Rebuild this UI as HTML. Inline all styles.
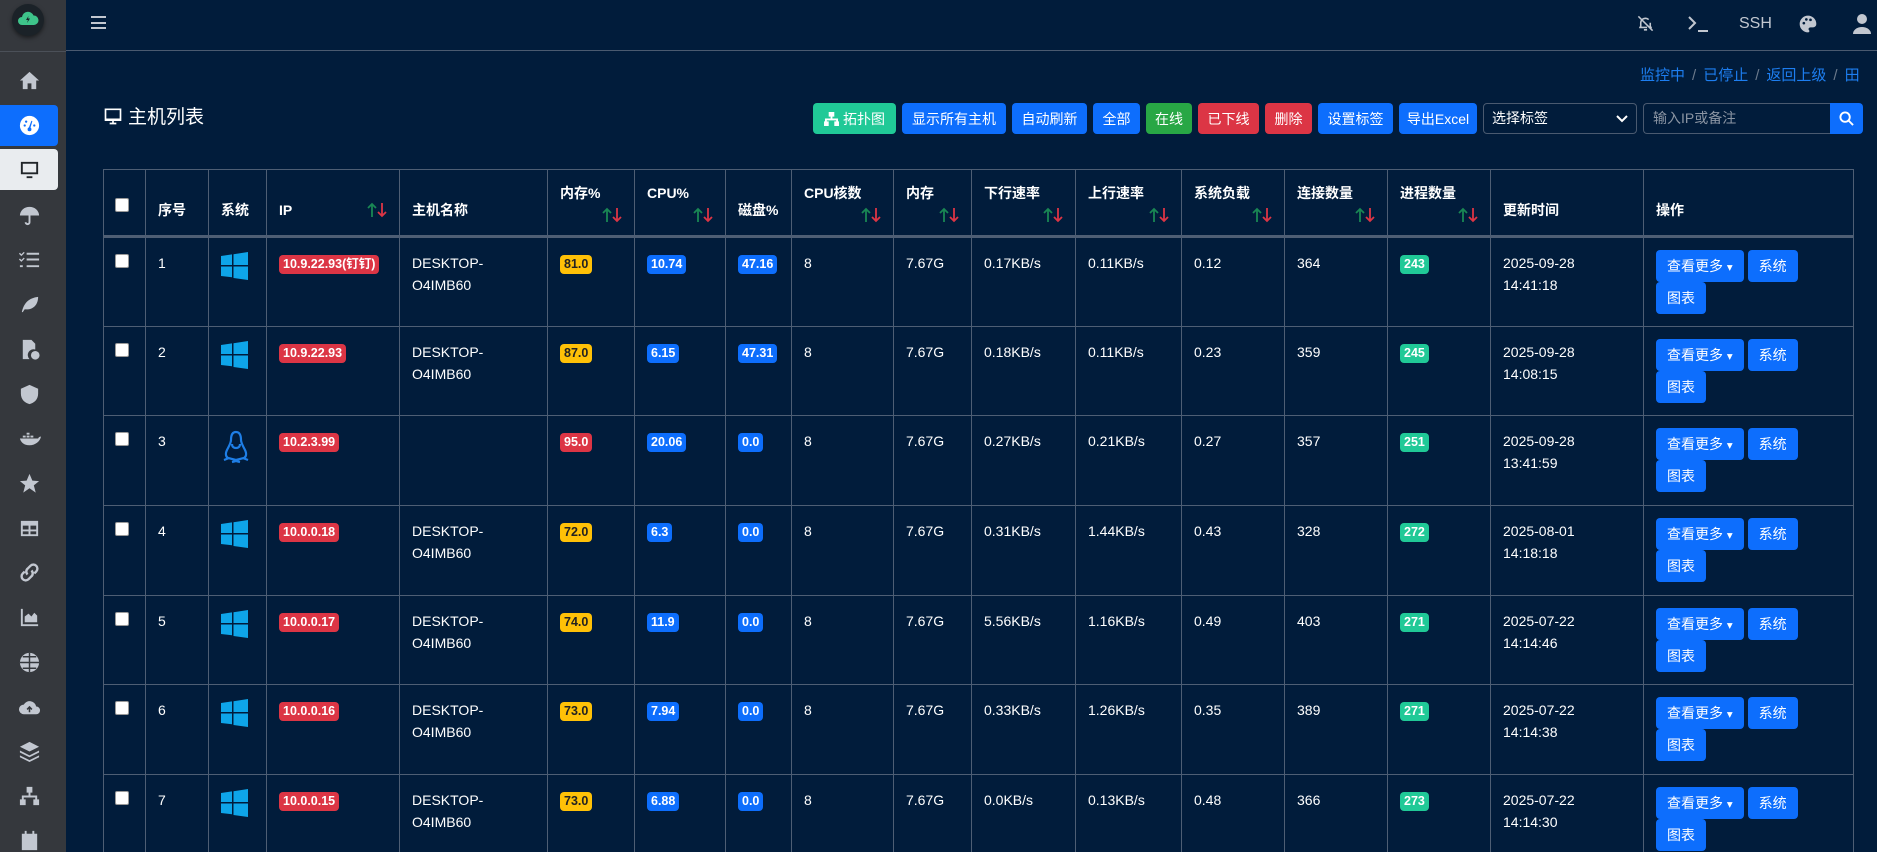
<!DOCTYPE html>
<html><head><meta charset="utf-8">
<style>
*{box-sizing:border-box;margin:0;padding:0}
html,body{width:1877px;height:852px;overflow:hidden}
body{background:#011c3b;font-family:"Liberation Sans","Noto Sans CJK SC",sans-serif;color:#fff;font-size:14px;position:relative}
.side{position:absolute;left:0;top:0;width:66px;height:852px;background:#35383d}
.side .sep{position:absolute;left:0;top:51px;width:66px;height:1px;background:#4b5058}
.logo{position:absolute;left:12px;top:4px;width:32px;height:32px;border-radius:50%;background:#1b2228;box-shadow:0 2px 4px rgba(0,0,0,.5)}
.si{position:absolute;left:0;width:58px;height:41px;display:flex;align-items:center;justify-content:center}
.si svg{width:23px;height:23px;fill:#c2c7d0}
.top{position:absolute;left:66px;top:0;right:0;height:51px;border-bottom:1px solid #4a5a70}
.ham{position:absolute;left:91px;top:16px;width:15px}
.ham i{display:block;height:2px;background:#c2c7d0;margin-bottom:3.5px}
.ti{position:absolute;top:14px;color:#c2c7d0;font-size:16px}
.bc{position:absolute;top:64px;left:1640px;font-size:15px;color:#1d7ef0;white-space:nowrap}
.bc span.s{color:#6c7a8c;margin:0 7px}
h1{position:absolute;left:103px;top:102px;font-size:19px;font-weight:normal;display:flex;align-items:center}
.btn{position:absolute;top:103px;height:31px;border-radius:4px;color:#fff;font-size:14px;display:flex;align-items:center;justify-content:center;white-space:nowrap}
.b{background:#0d6efd}.g{background:#20c997}.gr{background:#28a745}.r{background:#dc3545}
.sel{position:absolute;left:1483px;top:103px;width:154px;height:31px;border:1px solid #4a5a70;border-radius:4px;padding-left:8px;line-height:29px;font-size:14px}
.inp{position:absolute;left:1643px;top:103px;width:188px;height:31px;border:1px solid #4a5a70;border-right:none;border-radius:4px 0 0 4px;padding-left:9px;line-height:29px;color:#8b95a3;font-size:14px}
.sb{position:absolute;left:1830px;top:103px;width:33px;height:31px;background:#0d6efd;border-radius:0 4px 4px 0;display:flex;align-items:center;justify-content:center}
table{position:absolute;left:103px;top:169px;border-collapse:collapse;table-layout:fixed;width:1750px}
td,th{border:1px solid #4e5e74;text-align:left;vertical-align:top}
th{height:67px;font-weight:bold;vertical-align:bottom;padding:0 12px 14px;font-size:14px;line-height:22px;border-bottom:3px solid #4e5e74}
td{height:89.7px;padding:14px 12px 0;line-height:22px}
.ar{height:17px;margin-top:3px;margin-bottom:-3px;text-align:right;line-height:0}
.cb{display:inline-block;width:14px;height:14px;background:#fff;border-radius:2px;border:1px solid #999;margin-top:1px}
.bd{display:inline-block;padding:0 4px;border-radius:4px;font-size:12.5px;font-weight:bold;line-height:19px;margin-top:2px}
.y{background:#ffc107;color:#222}
.ab{display:inline-block;background:#0d6efd;border-radius:4px;height:32px;line-height:32px;padding:0 11px;font-size:14px;vertical-align:top}
</style></head><body>
<svg width="0" height="0" style="position:absolute"><defs><g id="arr"><path d="M5 15V2M1 6l4-4 4 4" stroke="#198754" stroke-width="1.8" fill="none"/><path d="M15 1v13M11 10l4 4 4-4" stroke="#dc3545" stroke-width="1.8" fill="none"/></g></defs></svg>
<div class="side">
 <div class="logo"><svg width="32" height="32" viewBox="0 0 32 32"><path d="M10 21a4 4 0 0 1 0-8 6 6 0 0 1 11.5-1.5A4.5 4.5 0 0 1 22 21z" fill="#3ec48a"/><path d="M16.5 12l-2.5 4h2l-1 3 3-4.5h-2z" fill="#1b2228"/></svg></div>
 <div class="sep"></div>
 <div class="si" style="top:60px"><svg viewBox="0 0 24 24"><path d="M12 3L2 12h3v9h5v-6h4v6h5v-9h3z"/></svg></div>
 <div class="si" style="top:105px;background:#0d6efd;border-radius:0 4px 4px 0"><svg viewBox="0 0 24 24" style="fill:#fff"><circle cx="12" cy="12" r="10"/><path d="M11 15l3-8 1 .4-2.3 8z" fill="#0d6efd"/><circle cx="12" cy="16" r="2" fill="#0d6efd"/><circle cx="7" cy="12" r="1.2" fill="#0d6efd"/><circle cx="8.5" cy="8" r="1.2" fill="#0d6efd"/><circle cx="17" cy="12" r="1.2" fill="#0d6efd"/></svg></div>
 <div class="si" style="top:149px;background:#e9ecef;border-radius:0 4px 4px 0"><svg viewBox="0 0 24 24" style="fill:#212529"><path d="M3 4h18v13H3z M5 6v9h14V6z M9 19h6v2H9z"/></svg></div>
 <div class="si" style="top:195px"><svg viewBox="0 0 24 24"><path d="M12 3a10 9 0 0 1 10 9H2A10 9 0 0 1 12 3zM11 12h2v7a3 3 0 0 1-6 0h2a1 1 0 0 0 2 0z"/></svg></div>
 <div class="si" style="top:239px"><svg viewBox="0 0 24 24"><path d="M2 5l1.5 1.5L6 4l1 1-3.5 3.5L1 6zM2 11l1.5 1.5L6 10l1 1-3.5 3.5L1 12zM2 18h3v2H2zM9 5h13v2H9zM9 11h13v2H9zM9 18h13v2H9z"/></svg></div>
 <div class="si" style="top:284px"><svg viewBox="0 0 24 24"><path d="M4 20C6 10 12 5 21 4c0 9-6 14-14 13l-2 3z"/></svg></div>
 <div class="si" style="top:329px"><svg viewBox="0 0 24 24"><path d="M5 2h9l4 4v6a6 6 0 0 0-6 10H5z"/><circle cx="18" cy="18" r="4.5"/></svg></div>
 <div class="si" style="top:374px"><svg viewBox="0 0 24 24"><path d="M12 2l9 4v5c0 6-4 10-9 11-5-1-9-5-9-11V6z"/></svg></div>
 <div class="si" style="top:418px"><svg viewBox="0 0 24 24"><path d="M2 12h19c1-2 2-2 3-2-1 5-6 9-12 9-6 0-9-3-10-7zM5 9h3v2H5zM9 9h3v2H9zM13 9h3v2h-3zM9 6h3v2H9z"/></svg></div>
 <div class="si" style="top:463px"><svg viewBox="0 0 24 24"><path d="M12 2l3 7 7 .5-5.5 4.5 2 7.5L12 17l-6.5 4.5 2-7.5L2 9.5 9 9z"/></svg></div>
 <div class="si" style="top:508px"><svg viewBox="0 0 24 24"><path d="M3 4h18v16H3zM5 9v4h6V9zm8 0v4h6V9zM5 15v3h6v-3zm8 0v3h6v-3z"/></svg></div>
 <div class="si" style="top:552px"><svg viewBox="0 0 24 24" style="fill:none;stroke:#c2c7d0;stroke-width:2.5"><path d="M10 14a4 4 0 0 1 0-6l3-3a4 4 0 0 1 6 6l-2 2M14 10a4 4 0 0 1 0 6l-3 3a4 4 0 0 1-6-6l2-2"/></svg></div>
 <div class="si" style="top:597px"><svg viewBox="0 0 24 24"><path d="M3 3h2v16h16v2H3zM7 17v-6l4-3 3 3 3-4 3 3v7z"/></svg></div>
 <div class="si" style="top:642px"><svg viewBox="0 0 24 24"><circle cx="12" cy="12" r="10"/><path d="M2 12h20M12 2v20M5 6h14M5 18h14" stroke="#35383d" stroke-width="1.5"/></svg></div>
 <div class="si" style="top:687px"><svg viewBox="0 0 24 24"><path d="M6 19a5 5 0 0 1 0-10 7 7 0 0 1 13 2 4 4 0 0 1 0 8z"/><path d="M12 17v-5M9.5 14l2.5-2.5 2.5 2.5" stroke="#35383d" stroke-width="1.6" fill="none"/></svg></div>
 <div class="si" style="top:731px"><svg viewBox="0 0 24 24"><path d="M12 2l10 5-10 5L2 7zM2 11l10 5 10-5v2l-10 5-10-5zM2 16l10 5 10-5v2l-10 5-10-5z"/></svg></div>
 <div class="si" style="top:776px"><svg viewBox="0 0 24 24"><path d="M9 2h6v6H9zM11 8h2v3h7v4h-2v-2H6v2H4v-4h7zM2 15h6v6H2zM16 15h6v6h-6z"/></svg></div>
 <div class="si" style="top:820px"><svg viewBox="0 0 24 24"><path d="M4 5h16v17H4zM7 2h2v4H7zM15 2h2v4h-2z"/></svg></div>
</div>
<div class="top"></div>
<div class="ham"><i></i><i></i><i></i></div>
<svg class="ti" style="left:1636px;top:14px" width="19" height="19" viewBox="0 0 24 24" fill="none" stroke="#c2c7d0" stroke-width="2"><path d="M6 17V11a6 6 0 0 1 10-4M18 11v6h2M4 17h10M10 20h4M3 3l18 18"/></svg>
<svg class="ti" style="left:1687px;top:15px" width="22" height="18" viewBox="0 0 22 18" fill="none" stroke="#c2c7d0" stroke-width="2"><path d="M2 2l6 6-6 6M11 16h10"/></svg>
<div class="ti" style="left:1739px;top:15px">SSH</div>
<svg class="ti" style="left:1798px;top:14px" width="20" height="20" viewBox="0 0 24 24"><path d="M12 2a10 10 0 0 0 0 20c2 0 2-2 1-3s0-3 2-3h3a4 4 0 0 0 4-4c0-6-5-10-10-10z" fill="#c2c7d0"/><circle cx="7" cy="11" r="1.6" fill="#011c3b"/><circle cx="10" cy="6.5" r="1.6" fill="#011c3b"/><circle cx="15" cy="7" r="1.6" fill="#011c3b"/></svg>
<svg class="ti" style="left:1853px;top:14px" width="18" height="20" viewBox="0 0 18 20"><circle cx="9" cy="5" r="5" fill="#c2c7d0"/><path d="M0 20a9 7 0 0 1 18 0z" fill="#c2c7d0"/></svg>
<div class="bc">监控中<span class="s">/</span>已停止<span class="s">/</span>返回上级<span class="s">/</span>田</div>
<h1><svg width="20" height="20" viewBox="0 0 24 24" style="margin-right:5px"><path d="M2 3h20v15H2zM4 5v10h16V5zM8 20h8v2H8z M11 17h2v4h-2z" fill="#fff"/></svg>主机列表</h1>
<div class="btn g" style="left:813px;width:83px"><svg width="15" height="14" viewBox="0 0 16 15" style="margin-right:4px"><path d="M5 0h6v5H9v2h6v3h1v5h-5v-5h2V9H3v1h2v5H0v-5h1V7h6V5H5z" fill="#fff"/></svg>拓扑图</div>
<div class="btn b" style="left:902px;width:104px">显示所有主机</div>
<div class="btn b" style="left:1012px;width:75px">自动刷新</div>
<div class="btn b" style="left:1093px;width:47px">全部</div>
<div class="btn gr" style="left:1146px;width:46px">在线</div>
<div class="btn r" style="left:1198px;width:61px">已下线</div>
<div class="btn r" style="left:1265px;width:47px">删除</div>
<div class="btn b" style="left:1318px;width:75px">设置标签</div>
<div class="btn b" style="left:1399px;width:78px">导出Excel</div>
<div class="sel">选择标签<svg style="position:absolute;right:8px;top:11px" width="12" height="8" viewBox="0 0 12 8" fill="none" stroke="#fff" stroke-width="2"><path d="M1 1l5 5 5-5"/></svg></div>
<div class="inp">输入IP或备注</div>
<div class="sb"><svg width="15" height="15" viewBox="0 0 16 16" fill="none" stroke="#fff" stroke-width="2"><circle cx="6.5" cy="6.5" r="5"/><path d="M10 10l5 5"/></svg></div>

<table>
<colgroup><col style="width:42px"><col style="width:63px"><col style="width:58px"><col style="width:133px"><col style="width:148px"><col style="width:87px"><col style="width:91px"><col style="width:66px"><col style="width:102px"><col style="width:78px"><col style="width:104px"><col style="width:106px"><col style="width:103px"><col style="width:103px"><col style="width:103px"><col style="width:153px"><col style="width:210px"></colgroup>
<tr>
<th style="padding-left:11px;padding-bottom:17px"><span class="cb"></span></th><th>序号</th><th>系统</th>
<th><div style="display:flex;justify-content:space-between;align-items:center"><span>IP</span><svg width="20" height="16"><use href="#arr"/></svg></div></th>
<th>主机名称</th>
<th>内存%<div class="ar"><svg width="20" height="16"><use href="#arr"/></svg></div></th>
<th>CPU%<div class="ar"><svg width="20" height="16"><use href="#arr"/></svg></div></th>
<th>磁盘%</th>
<th>CPU核数<div class="ar"><svg width="20" height="16"><use href="#arr"/></svg></div></th>
<th>内存<div class="ar"><svg width="20" height="16"><use href="#arr"/></svg></div></th>
<th>下行速率<div class="ar"><svg width="20" height="16"><use href="#arr"/></svg></div></th>
<th>上行速率<div class="ar"><svg width="20" height="16"><use href="#arr"/></svg></div></th>
<th>系统负载<div class="ar"><svg width="20" height="16"><use href="#arr"/></svg></div></th>
<th>连接数量<div class="ar"><svg width="20" height="16"><use href="#arr"/></svg></div></th>
<th>进程数量<div class="ar"><svg width="20" height="16"><use href="#arr"/></svg></div></th>
<th>更新时间</th><th>操作</th>
</tr>
<tr><td style="padding-left:11px"><span class="cb"></span></td><td>1</td><td><svg width="27" height="28" viewBox="0 0 27 28"><path d="M0 4l11-1.6V13H0zM12.5 2.2L27 0v13H12.5zM0 14.5h11v10.8L0 24zM12.5 14.5H27V28l-14.5-2z" fill="#0ea5e9"/></svg></td><td><span class="bd r">10.9.22.93(钉钉)</span></td><td>DESKTOP-<br>O4IMB60</td><td><span class="bd y">81.0</span></td><td><span class="bd b">10.74</span></td><td><span class="bd b">47.16</span></td><td>8</td><td>7.67G</td><td>0.17KB/s</td><td>0.11KB/s</td><td>0.12</td><td>364</td><td><span class="bd g">243</span></td><td>2025-09-28<br>14:41:18</td><td style="padding-top:12px"><span class="ab">查看更多 <small>▾</small></span> <span class="ab">系统</span><br><span class="ab">图表</span></td></tr>
<tr><td style="padding-left:11px"><span class="cb"></span></td><td>2</td><td><svg width="27" height="28" viewBox="0 0 27 28"><path d="M0 4l11-1.6V13H0zM12.5 2.2L27 0v13H12.5zM0 14.5h11v10.8L0 24zM12.5 14.5H27V28l-14.5-2z" fill="#0ea5e9"/></svg></td><td><span class="bd r">10.9.22.93</span></td><td>DESKTOP-<br>O4IMB60</td><td><span class="bd y">87.0</span></td><td><span class="bd b">6.15</span></td><td><span class="bd b">47.31</span></td><td>8</td><td>7.67G</td><td>0.18KB/s</td><td>0.11KB/s</td><td>0.23</td><td>359</td><td><span class="bd g">245</span></td><td>2025-09-28<br>14:08:15</td><td style="padding-top:12px"><span class="ab">查看更多 <small>▾</small></span> <span class="ab">系统</span><br><span class="ab">图表</span></td></tr>
<tr><td style="padding-left:11px"><span class="cb"></span></td><td>3</td><td><svg width="30" height="34" viewBox="0 0 30 34" fill="none" stroke="#1e7ee6" stroke-width="2.2"><path d="M15 2c-4 0-5 4-5 8 0 3-2 6-4 10-2 4-1 7 1 8l8 2 8-2c2-1 3-4 1-8-2-4-4-7-4-10 0-4-1-8-5-8z"/><path d="M11 14c0 3 2 4 4 4s4-1 4-4M3 30l5-2M27 30l-5-2M11 32l4-1 4 1"/></svg></td><td><span class="bd r">10.2.3.99</span></td><td></td><td><span class="bd r">95.0</span></td><td><span class="bd b">20.06</span></td><td><span class="bd b">0.0</span></td><td>8</td><td>7.67G</td><td>0.27KB/s</td><td>0.21KB/s</td><td>0.27</td><td>357</td><td><span class="bd g">251</span></td><td>2025-09-28<br>13:41:59</td><td style="padding-top:12px"><span class="ab">查看更多 <small>▾</small></span> <span class="ab">系统</span><br><span class="ab">图表</span></td></tr>
<tr><td style="padding-left:11px"><span class="cb"></span></td><td>4</td><td><svg width="27" height="28" viewBox="0 0 27 28"><path d="M0 4l11-1.6V13H0zM12.5 2.2L27 0v13H12.5zM0 14.5h11v10.8L0 24zM12.5 14.5H27V28l-14.5-2z" fill="#0ea5e9"/></svg></td><td><span class="bd r">10.0.0.18</span></td><td>DESKTOP-<br>O4IMB60</td><td><span class="bd y">72.0</span></td><td><span class="bd b">6.3</span></td><td><span class="bd b">0.0</span></td><td>8</td><td>7.67G</td><td>0.31KB/s</td><td>1.44KB/s</td><td>0.43</td><td>328</td><td><span class="bd g">272</span></td><td>2025-08-01<br>14:18:18</td><td style="padding-top:12px"><span class="ab">查看更多 <small>▾</small></span> <span class="ab">系统</span><br><span class="ab">图表</span></td></tr>
<tr><td style="padding-left:11px"><span class="cb"></span></td><td>5</td><td><svg width="27" height="28" viewBox="0 0 27 28"><path d="M0 4l11-1.6V13H0zM12.5 2.2L27 0v13H12.5zM0 14.5h11v10.8L0 24zM12.5 14.5H27V28l-14.5-2z" fill="#0ea5e9"/></svg></td><td><span class="bd r">10.0.0.17</span></td><td>DESKTOP-<br>O4IMB60</td><td><span class="bd y">74.0</span></td><td><span class="bd b">11.9</span></td><td><span class="bd b">0.0</span></td><td>8</td><td>7.67G</td><td>5.56KB/s</td><td>1.16KB/s</td><td>0.49</td><td>403</td><td><span class="bd g">271</span></td><td>2025-07-22<br>14:14:46</td><td style="padding-top:12px"><span class="ab">查看更多 <small>▾</small></span> <span class="ab">系统</span><br><span class="ab">图表</span></td></tr>
<tr><td style="padding-left:11px"><span class="cb"></span></td><td>6</td><td><svg width="27" height="28" viewBox="0 0 27 28"><path d="M0 4l11-1.6V13H0zM12.5 2.2L27 0v13H12.5zM0 14.5h11v10.8L0 24zM12.5 14.5H27V28l-14.5-2z" fill="#0ea5e9"/></svg></td><td><span class="bd r">10.0.0.16</span></td><td>DESKTOP-<br>O4IMB60</td><td><span class="bd y">73.0</span></td><td><span class="bd b">7.94</span></td><td><span class="bd b">0.0</span></td><td>8</td><td>7.67G</td><td>0.33KB/s</td><td>1.26KB/s</td><td>0.35</td><td>389</td><td><span class="bd g">271</span></td><td>2025-07-22<br>14:14:38</td><td style="padding-top:12px"><span class="ab">查看更多 <small>▾</small></span> <span class="ab">系统</span><br><span class="ab">图表</span></td></tr>
<tr><td style="padding-left:11px"><span class="cb"></span></td><td>7</td><td><svg width="27" height="28" viewBox="0 0 27 28"><path d="M0 4l11-1.6V13H0zM12.5 2.2L27 0v13H12.5zM0 14.5h11v10.8L0 24zM12.5 14.5H27V28l-14.5-2z" fill="#0ea5e9"/></svg></td><td><span class="bd r">10.0.0.15</span></td><td>DESKTOP-<br>O4IMB60</td><td><span class="bd y">73.0</span></td><td><span class="bd b">6.88</span></td><td><span class="bd b">0.0</span></td><td>8</td><td>7.67G</td><td>0.0KB/s</td><td>0.13KB/s</td><td>0.48</td><td>366</td><td><span class="bd g">273</span></td><td>2025-07-22<br>14:14:30</td><td style="padding-top:12px"><span class="ab">查看更多 <small>▾</small></span> <span class="ab">系统</span><br><span class="ab">图表</span></td></tr>
</table>
</body></html>
